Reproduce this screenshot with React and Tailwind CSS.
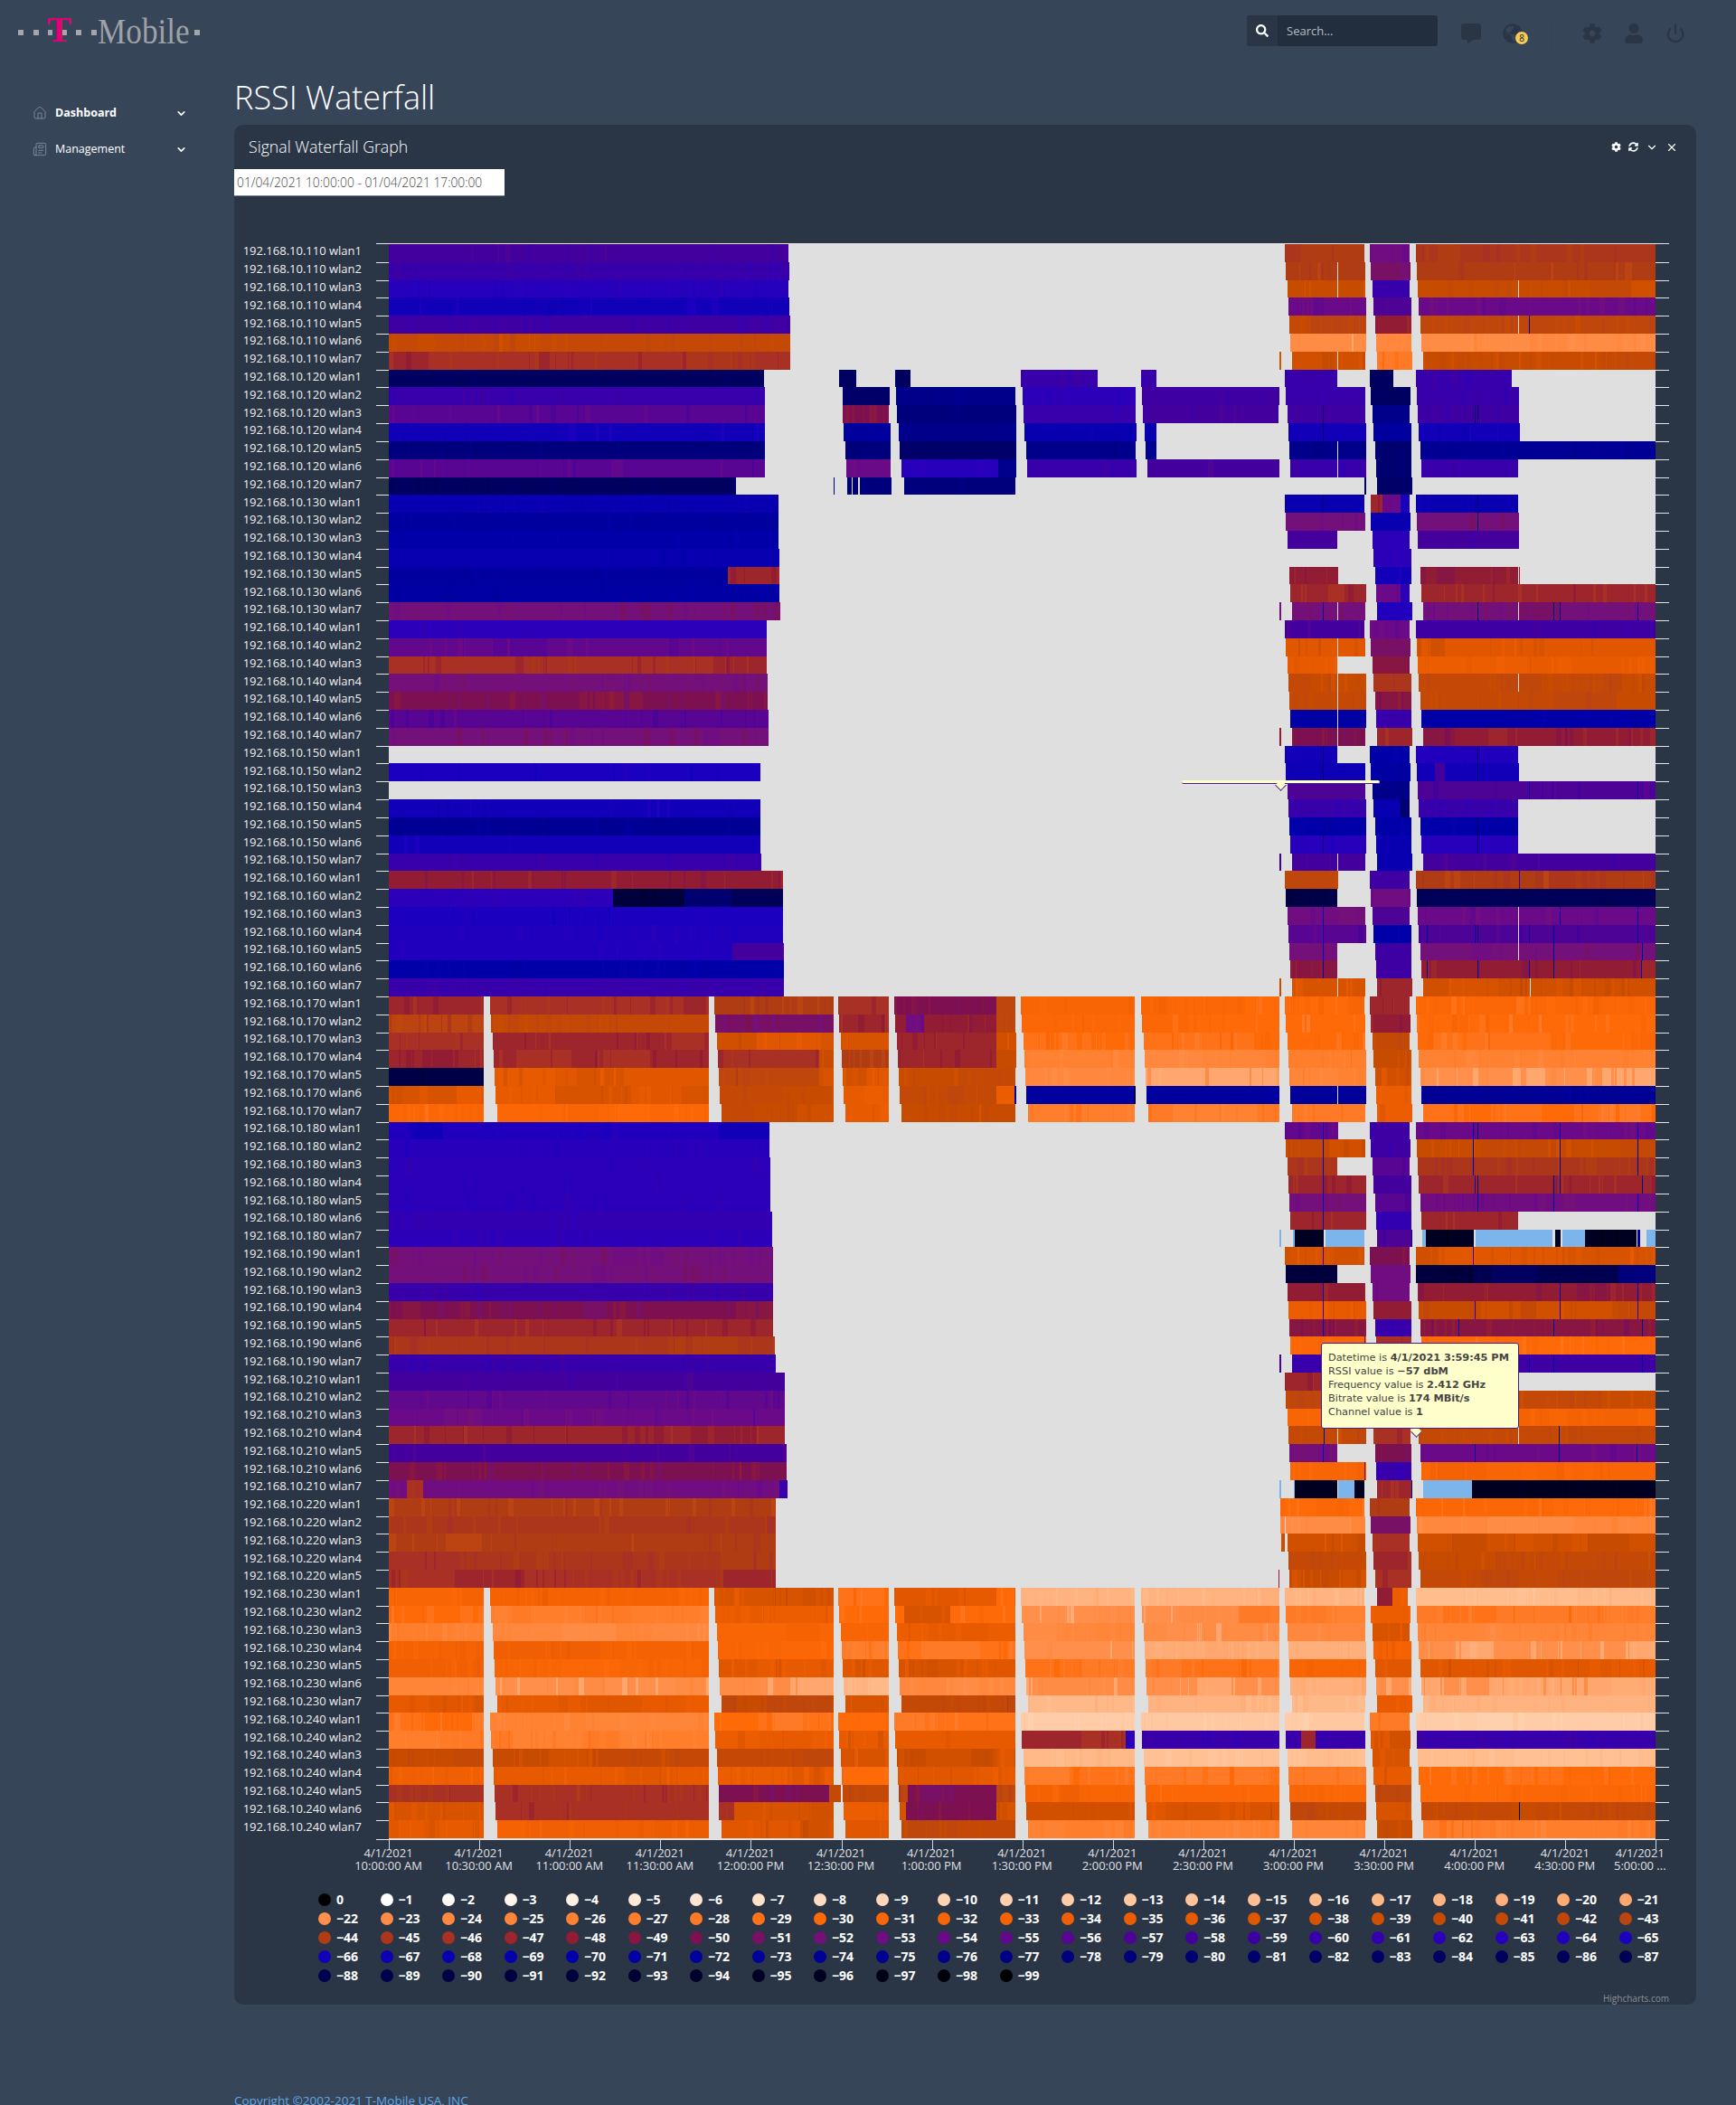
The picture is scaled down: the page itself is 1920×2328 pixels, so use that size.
import React from "react";
import { FaSearch, FaCommentAlt, FaGlobeAmericas, FaCog, FaUser, FaSyncAlt } from "react-icons/fa";
import { ChevronDown, X, Home, Newspaper, Power } from "lucide-react";

const STOPS = [
  [-1, [255, 255, 255]], [-7, [255, 224, 200]], [-14, [255, 196, 154]], [-21, [255, 167, 110]],
  [-22, [255, 143, 74]], [-28, [255, 122, 38]], [-30, [255, 106, 8]], [-36, [232, 90, 0]],
  [-40, [200, 76, 0]], [-43, [187, 68, 18]], [-44, [176, 60, 20]], [-46, [168, 48, 36]],
  [-48, [146, 28, 52]], [-50, [124, 16, 80]], [-52, [116, 16, 122]], [-54, [106, 10, 136]],
  [-58, [68, 0, 156]], [-62, [44, 0, 184]], [-65, [28, 0, 192]], [-66, [18, 0, 184]],
  [-68, [8, 0, 176]], [-70, [0, 0, 168]], [-75, [0, 0, 144]], [-80, [0, 0, 112]],
  [-88, [0, 0, 80]], [-92, [0, 0, 60]], [-96, [0, 0, 32]], [-99, [0, 0, 0]],
];
const LB = 1000;
function colorOf(v) {
  if (v === LB) return "#7cb5ec";
  if (v === 0) return "#000000";
  for (let i = 0; i < STOPS.length - 1; i++) {
    const [a, ca] = STOPS[i];
    const [b, cb] = STOPS[i + 1];
    if (v <= a && v >= b) {
      const t = (a - v) / (a - b);
      return `rgb(${ca.map((c, j) => Math.round(c + (cb[j] - c) * t)).join(",")})`;
    }
  }
  return "#000000";
}

const AS = [63, 66, 72, 75, 78, 81, 87];
const AE = [327, 330, 330, 333, 333, 333, 330];
const BS = [345, 348, 354, 357, 363, 366, 369];
const BE = [477, 480, 477, 483, 483, 483, 486];
const CS = [498, 501, 504, 507, 513, 516, 522];
const OFF = [0, 1, 3, 4, 5, 6, 8];
const Zx = (z) => Math.round(1400 + z / 3);

// row: [left, vA, vB, vC, opts]; left = [end, v] | 7 values of the whole-row segments | null
const ROWS = [
  [[872, -58], -45, -53, -45],
  [[873, -60], -44, -51, -44, { cuts: [1479] }],
  [[872, -63], -40, -60, -40, { cuts: [1479, 1679] }],
  [[873, -66], -54, -57, -54],
  [[874, -59], -42, -48, -42, { cuts: [1679], marks: [[1691, -70]] }],
  [[874, -41], -23, -23, -23],
  [[874, -46], -39, -29, -40, { cuts: [1479], x: [[1415, 1417, -38]] }],
  [[845, -84], -60, -84, -60, { ae: 237, be: 423, ce: 815, x: [[928, 947, -84], [990, 1007, -84], [1129, 1214, -60], [1262, 1279, -60]] }],
  [[846, -60], -60, -84, -60, { ce: 840, x: [[932, 984, -82], [991, 1123, -76], [1131, 1256, -62], [1263, 1415, -59]] }],
  [[846, -56], -59, -76, -59, { ce: 840, marks: [[1463, -84], [1631, -84], [1634, -84]], x: [[932, 983, -50], [992, 1124, -78], [1132, 1256, -60], [1264, 1414, -58]] }],
  [[846, -66], -66, -72, -66, { ce: 843, marks: [[1463, -84]], x: [[933, 985, -72], [994, 1124, -76], [1133, 1257, -68], [1266, 1279, -68]] }],
  [[846, -78], -76, -80, -74, { cuts: [1479], x: [[935, 985, -78], [995, 1124, -82], [1135, 1256, -76], [1267, 1279, -74]] }],
  [[846, -56], -60, -80, -60, { ce: 837, cuts: [1479], x: [[936, 985, -54], [997, 1104, -63], [1104, 1124, -76], [1136, 1257, -60], [1269, 1415, -58], [800, 846, -56]] }],
  [[814, -84], null, -82, null, { x: [[922, 923, -78], [937, 942, -78], [943, 949, -78], [951, 986, -78], [1000, 1123, -78], [1509, 1511, -80]] }],
  [[861, -68], -68, [[348, 386, -46], [386, 447, -54], [447, 477, -66]], -68, { ce: 837, marks: [[1463, -80], [1634, -84]] }],
  [[861, -72], -52, -68, -52, { ce: 840, marks: [[1634, -80]] }],
  [[861, -70], -58, -62, -58, { ae: 237, ce: 840 }],
  [[862, -68], null, -62, null],
  [[862, -72], -48, -66, -48, { ae: 240, ce: 837, x: [[805, 862, -47], [1680, 1681, -48]] }],
  [[862, -71], -47, [[366, 447, -54], [447, 477, -62]], -47],
  [[863, -52], -52, -64, -52, { cuts: [1479, 1679], marks: [[1463, -70], [1634, -80], [1718, -75], [1725, -75], [1811, -75]], x: [[1415, 1417, -52]] }],
  [[848, -62], -58, -54, -59],
  [[848, -55], -37, -51, -37, { cuts: [1479], x: [[1582, 1598, -39]] }],
  [[848, -46], -36, -49, -35, { ae: 237 }],
  [[849, -52], -41, -45, -41, { cuts: [1479, 1679] }],
  [[849, -50], -41, -50, -41, { cuts: [1479] }],
  [[850, -56], -71, -60, -70, { cuts: [1479] }],
  [[850, -52], -50, -47, -48, { cuts: [1479], x: [[1415, 1417, -48]] }],
  [null, -66, -70, -64, { ae: 237, ce: 837, marks: [[1463, -80], [1634, -84]] }],
  [[841, -65], -67, -71, -66, { ce: 840, marks: [[1463, -84], [1634, -84]], x: [[1587, 1598, -58]] }],
  [null, -57, -76, -57, { marks: [[1691, -72], [1811, -72]] }],
  [[841, -66], -60, [[357, 447, -68], [447, 477, -80]], -60, { ce: 837 }],
  [[841, -74], -70, -70, -70, { ce: 837, marks: [[1634, -88]] }],
  [[841, -66], -63, -68, -63, { ce: 837, marks: [[1463, -80], [1634, -84]] }],
  [[842, -60], -58, -68, -58, { cuts: [1479], x: [[1415, 1417, -58]] }],
  [[866, -48], -43, -59, -44, { ae: 240, marks: [[1680, -60]] }],
  [[866, -62], -90, -53, -86, { ae: 237, x: [[678, 757, -92], [757, 809, -80], [809, 866, -86]] }],
  [[866, -65], -53, -57, -54, { cuts: [1679], marks: [[1463, -70], [1725, -70], [1811, -72]] }],
  [[866, -64], -56, -70, -57, { cuts: [1679], marks: [[1463, -70], [1578, -70], [1631, -70], [1634, -80], [1691, -70], [1718, -72], [1811, -72]] }],
  [[867, -64], -52, -59, -52, { ae: 237, cuts: [1679], marks: [[1463, -72], [1718, -72], [1816, -72]], x: [[810, 867, -58]] }],
  [[867, -70], -48, -59, -48, { ae: 237, marks: [[1463, -70], [1578, -70], [1634, -70], [1691, -70], [1718, -72], [1815, -70]] }],
  [[867, -60], -38, -47, -39, { cuts: [1479, 1692], x: [[1415, 1417, -41]] }],
  [[-47, -46, -44, -46, -50, -32, -31], -31, -47, -31, { x: [[1102, 1123, -43]] }],
  [[-43, -41, -51, -47, -48, -31, -30], -30, -48, -30, { x: [[1002, 1022, -53], [1102, 1123, -42]] }],
  [[-46, -47, -38, -38, -47, -30, -30], -30, -41, -30, { x: [[1102, 1124, -38]] }],
  [[-47, -47, -46, -44, -47, -26, -25], -27, -40, -26, { x: [[906, 922, -40], [1102, 1124, -41]] }],
  [[-90, -37, -42, -38, -41, -24, -22], -25, -39, -22, { x: [[906, 922, -38]] }],
  [[-37, -37, -41, -35, -41, -72, -72], -73, -35, -74, { cuts: [1479], x: [[1102, 1122, -36], [1122, 1124, -70], [1254, 1256, -90]] }],
  [[-31, -31, -40, -36, -40, -27, -27], -28, -35, -29],
  [[851, -64], -55, -59, -54, { ae: 240, marks: [[1463, -72], [1629, -72], [1634, -78], [1725, -72], [1811, -72]], x: [[453, 490, -66], [795, 851, -66]] }],
  [[851, -63], -40, -59, -40, { marks: [[1463, -72], [1629, -70], [1725, -72], [1811, -72]] }],
  [[852, -62], -45, -56, -45, { ae: 237, marks: [[1463, -70], [1629, -70], [1725, -72], [1811, -72]] }],
  [[852, -62], -47, -58, -47, { marks: [[1463, -70], [1631, -70], [1634, -74], [1718, -72], [1725, -72], [1816, -72]] }],
  [[852, -62], -52, -56, -53, { marks: [[1463, -70], [1634, -72], [1718, -72], [1811, -72]] }],
  [[854, -61], -47, -61, -47, { ce: 837, marks: [[1463, -70]] }],
  [[854, -62], null, -57, null, { x: [[1415, 1417, LB], [1430, 1432, LB], [1432, 1464, -96], [1466, 1509, LB], [1561, 1562, -80], [1573, 1577, LB], [1577, 1630, -96], [1632, 1717, LB], [1720, 1726, -96], [1728, 1753, LB], [1753, 1810, -96], [1811, 1814, -70], [1821, 1831, LB]] }],
  [[855, -52], -38, -50, -38, { marks: [[1463, -60], [1629, -60]] }],
  [[855, -52], -92, -53, -88, { ae: 237, x: [[678, 810, -52], [1566, 1630, -92], [1650, 1700, -84], [1720, 1790, -88], [1790, 1831, -78]], ce: 1190 }],
  [[855, -60], -48, -53, -48, { marks: [[1463, -70], [1725, -70], [1811, -70]] }],
  [[855, -50], -36, -48, -40, { marks: [[1463, -58], [1631, -60], [1725, -62], [1811, -60]] }],
  [[855, -47], -49, -60, -49, { marks: [[1463, -70], [1613, -70], [1718, -70], [1816, -70]] }],
  [[857, -45], -30, -47, -30, { marks: [[1509, -50]] }],
  [[858, -60], -60, -50, -59, { marks: [[1691, -72], [1718, -72], [1816, -70]], x: [[1415, 1417, -58]] }],
  [[868, -58], -47, -59, -47, { ce: 837 }],
  [[868, -55], -41, -54, -41, { cuts: [1679] }],
  [[868, -54], -32, -50, -32],
  [[868, -47], -41, -46, -41, { cuts: [1479, 1679], marks: [[1464, -70], [1724, -70]], be: 480 }],
  [[870, -58], -53, -50, -54, { ae: 237, marks: [[1463, -70], [1631, -72], [1724, -72], [1810, -70]] }],
  [[870, -50], -32, -60, -32, { x: [[1509, 1510, -50]] }],
  [[871, -53], null, -47, null, { x: [[1415, 1417, LB], [1431, 1432, LB], [1432, 1479, -96], [1480, 1498, LB], [1498, 1509, -96], [1561, 1562, -75], [1574, 1628, LB], [1628, 1831, -96], [450, 468, -46], [862, 871, -60]] }],
  [[858, -44], -30, -44, -30, { x: [[1416, 1421, -30]] }],
  [[858, -45], -24, -51, -24, { x: [[1416, 1421, -24]] }],
  [[858, -44], -39, -46, -39, { x: [[1417, 1421, -39]] }],
  [[858, -45], -41, -47, -41],
  [[858, -46], -40, -46, -41, { x: [[1414, 1415, -48]] }],
  [[-33, -33, -38, -30, -37, -18, -18], -18, [[369, 420, -47], [420, 470, -35]], -16, { x: [[1102, 1122, -30]] }],
  [[-29, -27, -35, -30, -30, -22, -23], -27, -35, -28, { x: [[1000, 1051, -37], [1370, 1415, -28]] }],
  [[-26, -24, -33, -32, -36, -24, -23], -24, -38, -25],
  [[-33, -33, -31, -28, -29, -22, -20], -19, -33, -21],
  [[-34, -32, -36, -37, -37, -29, -29], -33, -37, -37],
  [[-25, -22, -22, -18, -24, -23, -21], -20, -22, -21],
  [[-37, -36, -41, -38, -42, -17, -18], -17, -36, -18],
  [[-29, -26, -29, -30, -29, -12, -13], -13, -28, -12],
  [[-27, -27, -35, -36, -36, -47, -60], -60, -38, -60, { x: [[1245, 1255, -62], [1439, 1455, -47]] }],
  [[-41, -40, -41, -37, -40, -17, -15], -15, -37, -16, { x: [[1102, 1122, -37]] }],
  [[-34, -36, -36, -29, -37, -28, -28], -28, -37, -30],
  [[-46, -46, -50, -41, -42, -33, -31], -31, -42, -31, { x: [[1004, 1102, -50], [917, 930, -42]] }],
  [[-38, -46, -38, -36, -38, -39, -38], -41, -37, -41, { x: [[1002, 1102, -50], [795, 812, -46], [1680, 1681, 0]] }],
  [[-36, -34, -38, -36, -41, -26, -25], -26, -40, -27],
];

function rng(seed) {
  let s = seed >>> 0;
  return () => {
    s = (s + 0x6d2b79f5) >>> 0;
    let t = s;
    t = Math.imul(t ^ (t >>> 15), t | 1);
    t ^= t + Math.imul(t ^ (t >>> 7), t | 61);
    return ((t ^ (t >>> 14)) >>> 0) / 4294967296;
  };
}
const PW = [1, 1, 2, 2, 3, 4, 6];
const ampOf = (v) => (v > -20 ? 1.3 : v > -33 ? 1.6 : v > -44 ? 1.6 : v > -56 ? 1.1 : v > -70 ? 0.7 : 1);

function buildPaths() {
  const y0 = (i) => Math.round(1 + 19.81 * i);
  const byVal = new Map();
  ROWS.forEach(([left, vA, vB, vC, o = {}], i) => {
    const k = i < 70 ? i % 7 : i < 75 ? i - 70 : (i - 75) % 7;
    const r = rng(i * 7919 + 13);
    const pix = new Array(1500).fill(null);
    const paint = (a, b, v) => {
      if (v === LB || v === 0) {
        for (let x = a; x < b; x++) pix[x - 420] = v;
        return;
      }
      const amp = ampOf(v);
      let x = Math.round(a);
      let block = 0;
      let next = x;
      while (x < b) {
        if (x >= next) {
          block = (r() - 0.5) * 2 * amp * 0.5;
          next = x + 15 + r() * 70;
        }
        const w = PW[Math.floor(r() * PW.length)];
        const hi = r() < 0.25 ? (r() - 0.5) * 2 * amp : 0;
        const val = Math.max(-99, Math.min(-1, Math.round(v + block + hi)));
        for (let q = x; q < Math.min(x + w, b); q++) pix[q - 420] = val;
        x += w;
      }
    };
    if (left && left.length === 2) paint(430, left[0], left[1]);
    else if (left) {
      const S = [430, 542, 790, 927, 989, 1129, 1262];
      const E = [535, 784, 922, 983, 1123, 1255, 1415];
      left.forEach((v, j) => paint(j === 0 ? 430 : S[j] + OFF[k], E[j], v));
    }
    if (vA !== null) paint(Zx(AS[k]), Zx(o.ae ?? AE[k]), vA);
    if (Array.isArray(vB)) vB.forEach(([a, b, v]) => paint(Zx(a), Zx(b), v));
    else paint(Zx(BS[k]), Zx(o.be ?? BE[k]), vB);
    if (vC !== null && !(o.ce && o.ce > 1300)) paint(Zx(CS[k]), Zx(o.ce ?? 1294), vC);
    (o.x || []).forEach(([a, b, v]) => paint(a, b, v));
    (o.marks || []).forEach(([x, v]) => { if (pix[x - 420] !== null) pix[x - 420] = v; });
    (o.cuts || []).forEach((x) => { pix[x - 420] = null; });
    const top = y0(i);
    const h = y0(i + 1) - top;
    let x = 0;
    while (x < pix.length) {
      const v = pix[x];
      if (v === null) { x++; continue; }
      let e = x + 1;
      while (e < pix.length && pix[e] === v) e++;
      const sx = x + 420 - 416;
      byVal.set(v, (byVal.get(v) || "") + `M${sx} ${top}h${e - x}v${h}h${x - e}z`);
      x = e;
    }
  });
  return [...byVal.entries()].map(([v, d]) => ({ v, d }));
}

const GROUPS = [[110, 7], [120, 7], [130, 7], [140, 7], [150, 7], [160, 7], [170, 7], [180, 7], [190, 7], [210, 7], [220, 5], [230, 7], [240, 7]];
const LABELS = GROUPS.flatMap(([g, n]) => Array.from({ length: n }, (_, i) => `192.168.10.${g} wlan${i + 1}`));
const TIMES = ["10:00:00 AM", "10:30:00 AM", "11:00:00 AM", "11:30:00 AM", "12:00:00 PM", "12:30:00 PM", "1:00:00 PM", "1:30:00 PM", "2:00:00 PM", "2:30:00 PM", "3:00:00 PM", "3:30:00 PM", "4:00:00 PM", "4:30:00 PM"];
const LEGEND = Array.from({ length: 100 }, (_, i) => i);

function Waterfall() {
  const paths = React.useMemo(buildPaths, []);
  return (
    <svg width="1430" height="1776" viewBox="0 0 1430 1776" className="block shrink-0">
      <rect x="14" y="1" width="1401" height="1764" fill="#dfdfdf" />
      <g shapeRendering="crispEdges">
        {paths.map(({ v, d }) => (
          <path key={v} d={d} fill={colorOf(v)} />
        ))}
        <path
          d={Array.from({ length: 88 }, (_, i) => {
            const y = Math.round(1 + 19.81 * (i + 1));
            return `M0 ${y}h14M1415 ${y}h15`;
          }).join("")}
          stroke="#e6e6e6"
          fill="none"
        />
        <path d="M0 0.5h1430M0 1765.5h1430" stroke="#e6e6e6" fill="none" />
        <path
          d={Array.from({ length: 15 }, (_, i) => `M${Math.round(14 + 100.1 * i)} 1765v11`).join("")}
          stroke="#ccd6eb"
          fill="none"
        />
      </g>
    </svg>
  );
}

function Logo() {
  return (
    <div className="relative w-[220px] h-[68px] shrink-0">
      {[20, 37, 84, 101, 215].map((x) => (
        <span key={x} className="absolute top-[33px] w-[6px] h-[6px] bg-[#a3a6aa]" style={{ left: x }} />
      ))}
      <span className="absolute left-[52px] top-[9px] text-[40px] leading-[48px] font-bold text-[#e20074] font-['Liberation_Serif',serif]">T</span>
      <span className="absolute left-[53px] top-[33px] w-[5px] h-[6px] bg-[#a3a6aa]" />
      <span className="absolute left-[69px] top-[33px] w-[5px] h-[6px] bg-[#a3a6aa]" />
      <span className="absolute left-[108px] top-[11px] text-[40px] leading-[48px] text-[#9ea1a5] font-['Liberation_Serif',serif] origin-left scale-x-[0.88]">Mobile</span>
    </div>
  );
}

export default function App() {
  return (
    <div className="relative w-[1920px] h-[2328px] overflow-hidden bg-[#374559] font-['Open_Sans',sans-serif] text-white">
      <header className="flex h-[68px] items-start">
        <Logo />
        <div className="ml-[1159px] mt-[17px] flex h-[34px] w-[211px] overflow-hidden rounded-[3px] bg-[#222e3d]">
          <div className="flex w-[34px] items-center justify-center bg-[#2a3546]">
            <FaSearch className="text-[14px] text-white" />
          </div>
          <span className="flex items-center pl-[10px] pt-[2px] text-[13px] text-[#b4bcc6]">Search...</span>
        </div>
        <div className="relative ml-[26px] mt-[22px] flex items-center text-[#2a3546]">
          <FaCommentAlt className="w-[22px] h-[22px]" />
          <div className="relative ml-[24px]">
            <FaGlobeAmericas className="w-[22px] h-[22px]" />
            <span className="absolute left-[14px] top-[9px] flex h-[14px] w-[14px] items-center justify-center rounded-full bg-[#f6ca56] text-[10px] leading-none text-[#222]">8</span>
          </div>
          <span className="ml-[32px] h-[30px] w-px bg-[#33405a]" />
          <FaCog className="ml-[33px] w-[22px] h-[22px]" />
          <FaUser className="ml-[24px] w-[22px] h-[22px]" />
          <Power className="ml-[24px] w-[22px] h-[22px]" strokeWidth={2.4} />
        </div>
      </header>

      <div className="flex">
        <aside className="w-[259px] shrink-0 pt-[43px] text-[12.5px]">
          <div className="flex h-[28px] items-center pl-[36px]">
            <Home className="w-[16px] h-[16px] text-[#8c98a8]" strokeWidth={1.2} />
            <span className="ml-[9px] w-[133px] font-bold">Dashboard</span>
            <ChevronDown className="w-[13px] h-[13px]" strokeWidth={3} />
          </div>
          <div className="mt-[12px] flex h-[28px] items-center pl-[36px]">
            <Newspaper className="w-[16px] h-[16px] text-[#8c98a8]" strokeWidth={1.2} />
            <span className="ml-[9px] w-[133px]">Management</span>
            <ChevronDown className="w-[13px] h-[13px]" strokeWidth={3} />
          </div>
        </aside>

        <main className="w-[1617px]">
          <h1 className="flex h-[70px] items-end pb-[6px] text-[36px] leading-[48px] font-light">RSSI Waterfall</h1>
          <section className="relative h-[2079px] rounded-[10px] bg-[#2a3546]">
            <div className="flex h-[49px] items-center justify-between pl-[16px] pr-[20px]">
              <h2 className="text-[17.7px] font-light">Signal Waterfall Graph</h2>
              <div className="flex items-center gap-[8px]">
                <FaCog className="w-[11px] h-[11px]" />
                <FaSyncAlt className="w-[11px] h-[11px]" />
                <ChevronDown className="w-[14px] h-[14px]" />
                <X className="w-[14px] h-[14px]" />
              </div>
            </div>
            <div className="flex h-[30px] w-[299px] items-center border-b border-[#7f8791] bg-white pl-[3px] pt-[2px] text-[13.8px] font-light whitespace-nowrap text-[#444]">
              01/04/2021 10:00:00 - 01/04/2021 17:00:00
            </div>

            <div className="mt-[52px] flex items-start">
              <div className="-mt-px w-[157px] shrink-0">
                {LABELS.map((l) => (
                  <div key={l} className="flex h-[19.81px] items-center justify-end pr-[16px] text-[13px] leading-none font-medium whitespace-nowrap text-[#f0f0f0]">
                    {l}
                  </div>
                ))}
              </div>
              <Waterfall />
            </div>

            <div className="ml-[120.5px] -mt-[3px] flex text-[13px] leading-[14px] text-[#e0e0e3]">
              {TIMES.map((t, i) => (
                <div key={t + i} className="w-[100.1px] shrink-0 text-center whitespace-nowrap">
                  4/1/2021
                  <br />
                  {t}
                </div>
              ))}
              <div className="w-[66px] shrink-0 text-center whitespace-nowrap">
                4/1/2021
                <br />
                5:00:00 ...
              </div>
            </div>

            <div className="ml-[93px] mt-[20px] grid grid-cols-[repeat(22,68.5px)] auto-rows-[21px]">
              {LEGEND.map((n) => (
                <div key={n} className="flex items-center">
                  <span className="h-[14px] w-[14px] shrink-0 rounded-full" style={{ background: colorOf(-n) }} />
                  <span className="ml-[6px] text-[14px] leading-none font-bold text-white">{n === 0 ? "0" : `\u2212${n}`}</span>
                </div>
              ))}
            </div>

            <div className="mt-[8px] pr-[30px] text-right text-[10px] leading-[14px] text-[#8a9098]">Highcharts.com</div>

            <div className="absolute left-[1048px] top-[725px] h-[4px] w-[219px] rounded-[2px] border-b border-[#4b1a8e] bg-[#ffffcc]" />
            <div className="absolute left-[1153px] top-[726px] h-[9px] w-[9px] rotate-45 border-r border-b border-[#4b1a8e] bg-[#ffffcc]" />

            <div className="absolute left-[1303px] top-[1441px] h-[9px] w-[9px] rotate-45 border-r border-b border-[#4b1a8e] bg-[#ffffcc]" />
            <div className="absolute left-[1202px] top-[1347px] h-[95px] w-[219px] rounded-[3px] border border-[#4b1a8e] bg-[#ffffcc] pl-[7px] pt-[8px] font-['DejaVu_Sans',sans-serif] text-[11.3px] leading-[15px] whitespace-nowrap text-[#444]">
              <div>Datetime is <b>4/1/2021 3:59:45 PM</b></div>
              <div>RSSI value is <b>−57 dbM</b></div>
              <div>Frequency value is <b>2.412 GHz</b></div>
              <div>Bitrate value is <b>174 MBit/s</b></div>
              <div>Channel value is <b>1</b></div>
            </div>
          </section>
          <footer className="mt-[97px] text-[13.5px] leading-[18px] text-[#62a8e4]">Copyright ©2002-2021 T-Mobile USA, INC</footer>
        </main>
      </div>
    </div>
  );
}
